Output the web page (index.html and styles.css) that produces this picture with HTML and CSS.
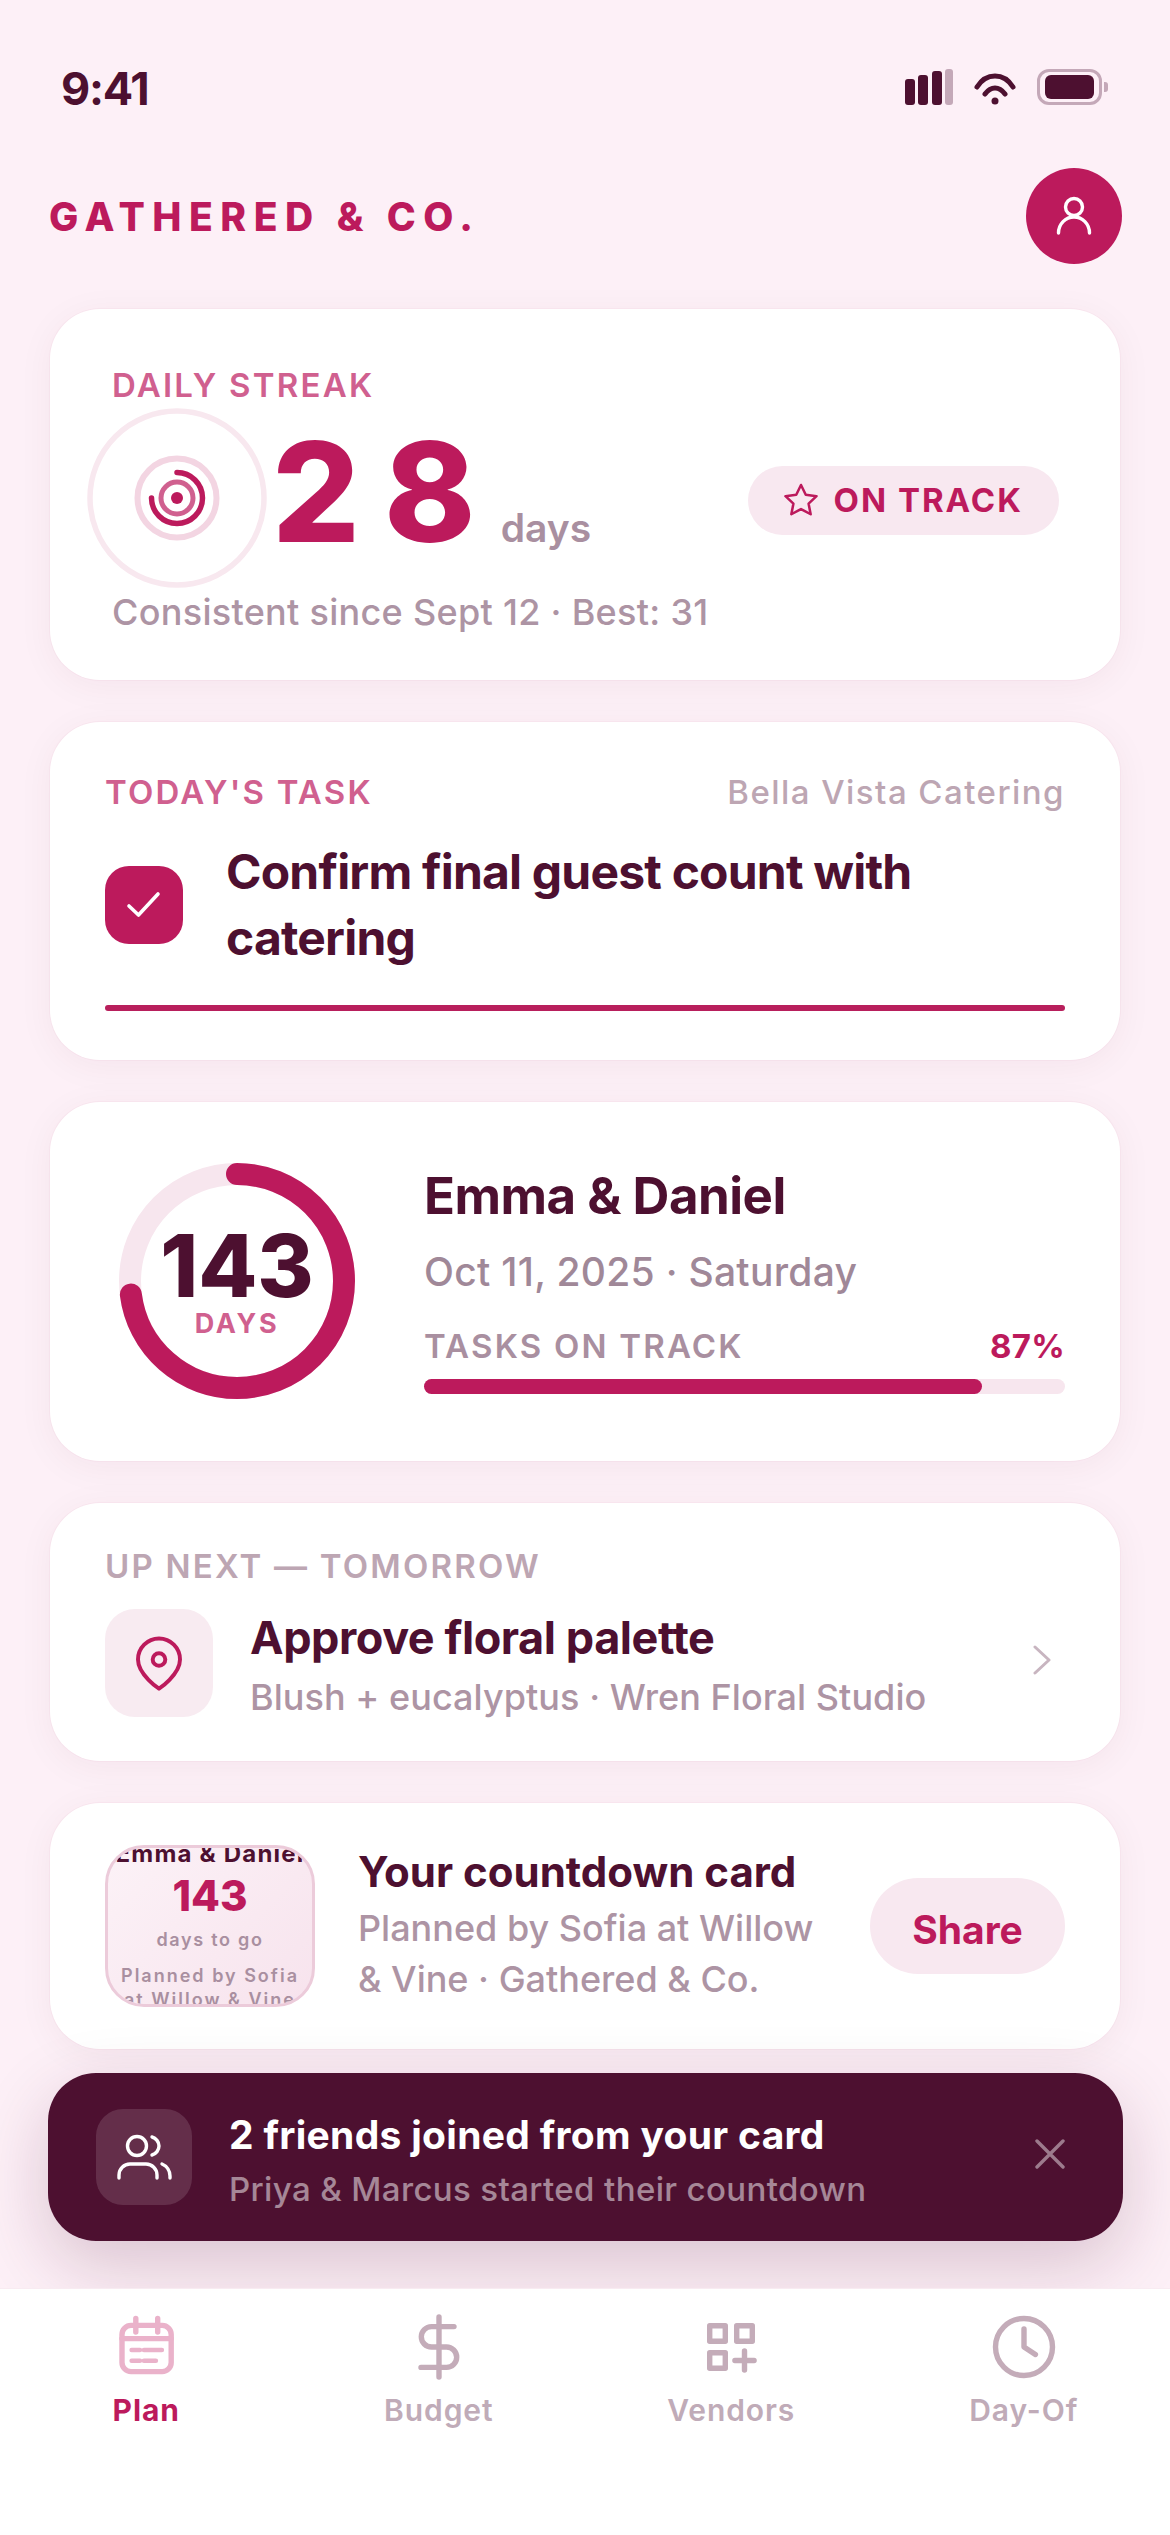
FILE: index.html
```html
<!DOCTYPE html>
<html lang="en">
<head>
    <meta charset="UTF-8">
    <meta name="viewport" content="width=device-width, initial-scale=1.0">
    <title>Gathered &amp; Co.</title>
    <link rel="stylesheet" href="styles.css">
</head>
<body>
    <div class="screen">
        <!-- Status bar -->
        <div class="status-bar">
            <span class="time">9:41</span>
            <div class="status-icons">
                <div class="signal">
                    <span class="sig-1"></span>
                    <span class="sig-2"></span>
                    <span class="sig-3"></span>
                    <span class="sig-4"></span>
                </div>
                <svg class="wifi" width="44" height="34" viewBox="0 0 44 34" fill="none" stroke="#4d1030" stroke-width="5" stroke-linecap="round">
                    <path d="M4 15C9 7 15 4 22 4s13 3 18 11"/>
                    <path d="M12 22c3-4 6-6 10-6s7 2 10 6"/>
                    <circle cx="22" cy="29" r="3.5" fill="#4d1030" stroke="none"/>
                </svg>
                <div class="battery">
                    <div class="battery-body"><div class="battery-fill"></div></div>
                    <div class="battery-cap"></div>
                </div>
            </div>
        </div>

        <!-- Header -->
        <div class="topbar">
            <div class="brand">GATHERED &amp; CO.</div>
            <div class="avatar">
                <svg width="48" height="48" viewBox="0 0 48 48" fill="none" stroke="#fff" stroke-width="3.4" stroke-linecap="round">
                    <circle cx="24" cy="15" r="8.5"/>
                    <path d="M8.5 41c0-9 7-16 15.500-16s15.500 7 15.500 16"/>
                </svg>
            </div>
        </div>

        <div class="cards">
            <!-- Daily streak -->
            <section class="card streak-card">
                <div class="label label-pink">DAILY STREAK</div>
                <div class="streak-row">
                    <svg class="streak-ring" width="180" height="180" viewBox="0 0 180 180" fill="none">
                        <circle cx="90" cy="90" r="87" stroke="#f8e8ef" stroke-width="5.500"/>
                        <circle cx="90" cy="90" r="39.500" stroke="#f3d5e2" stroke-width="6"/>
                        <path d="M90 64.500A25.500 25.500 0 1 1 64.500 90" stroke="#bc1a5c" stroke-width="5.500" stroke-linecap="round"/>
                        <circle cx="90" cy="90" r="16" stroke="#d0608f" stroke-width="5"/>
                        <circle cx="90" cy="90" r="6" fill="#bc1a5c"/>
                    </svg>
                    <div class="streak-count">
                        <span class="streak-num">28</span>
                        <span class="streak-unit">days</span>
                    </div>
                    <div class="pill">
                        <svg width="38" height="38" viewBox="0 0 24 24" fill="none" stroke="#bc1a5c" stroke-width="1.600" stroke-linejoin="round">
                            <path d="M12 2.500l3 6.200 6.800.9-5 4.700 1.300 6.700-6.100-3.300-6.100 3.300 1.300-6.700-5-4.700 6.800-.9z"/>
                        </svg>
                        <span>ON TRACK</span>
                    </div>
                </div>
                <div class="streak-sub">Consistent since Sept 12 · Best: 31</div>
            </section>

            <!-- Today's task -->
            <section class="card task-card">
                <div class="task-head">
                    <span class="label label-pink">TODAY'S TASK</span>
                    <span class="task-vendor">Bella Vista Catering</span>
                </div>
                <div class="task-row">
                    <div class="checkbox">
                        <svg width="36" height="36" viewBox="0 0 36 36" fill="none" stroke="#fff" stroke-width="3.600" stroke-linecap="round" stroke-linejoin="round">
                            <path d="M3 19l9.500 9L32 7"/>
                        </svg>
                    </div>
                    <div class="task-title">Confirm final guest count with catering</div>
                </div>
                <div class="task-bar"></div>
            </section>

            <!-- Countdown -->
            <section class="card countdown-card">
                <div class="gauge">
                    <svg width="236" height="236" viewBox="0 0 236 236" fill="none">
                        <circle cx="118" cy="118" r="107" stroke="#f7e6ee" stroke-width="22"/>
                        <circle class="gauge-arc" cx="118" cy="118" r="107" stroke="#bc1a5c" stroke-width="22" stroke-linecap="round" stroke-dasharray="490 672"/>
                    </svg>
                    <div class="gauge-text">
                        <div class="gauge-num">143</div>
                        <div class="gauge-unit">DAYS</div>
                    </div>
                </div>
                <div class="countdown-info">
                    <div class="couple">Emma &amp; Daniel</div>
                    <div class="wedding-date">Oct 11, 2025 · Saturday</div>
                    <div class="progress-head">
                        <span class="label label-muted">TASKS ON TRACK</span>
                        <span class="progress-val">87%</span>
                    </div>
                    <div class="progress"><div class="progress-fill"></div></div>
                </div>
            </section>

            <!-- Up next -->
            <section class="card next-card">
                <div class="label label-soft">UP NEXT — TOMORROW</div>
                <div class="next-row">
                    <div class="next-icon">
                        <svg width="56" height="56" viewBox="0 0 24 24" fill="none" stroke="#bc1a5c" stroke-width="1.700" stroke-linejoin="round">
                            <path d="M21 10.500c0 6.500-9 12.500-9 12.500s-9-6-9-12.500a9 9 0 0 1 18 0z"/>
                            <circle cx="12" cy="10.500" r="2.700"/>
                        </svg>
                    </div>
                    <div class="next-text">
                        <div class="next-title">Approve floral palette</div>
                        <div class="next-sub">Blush + eucalyptus · Wren Floral Studio</div>
                    </div>
                    <svg class="chevron" width="20" height="30" viewBox="0 0 20 30" fill="none" stroke="#c8b5c0" stroke-width="3" stroke-linecap="round" stroke-linejoin="round">
                        <path d="M3 2l14 13L3 28"/>
                    </svg>
                </div>
            </section>

            <!-- Countdown card share -->
            <section class="card share-card">
                <div class="thumb">
                    <div class="thumb-name">Emma &amp; Daniel</div>
                    <div class="thumb-num">143</div>
                    <div class="thumb-days">days to go</div>
                    <div class="thumb-by">Planned by Sofia at Willow &amp; Vine</div>
                </div>
                <div class="share-text">
                    <div class="share-title">Your countdown card</div>
                    <div class="share-sub">Planned by Sofia at Willow &amp; Vine · Gathered &amp; Co.</div>
                </div>
                <div class="share-btn">Share</div>
            </section>
        </div>

        <!-- Toast -->
        <div class="toast">
            <div class="toast-icon">
                <svg width="60" height="60" viewBox="0 0 60 60" fill="none" stroke="#fff" stroke-width="3.400" stroke-linecap="round">
                    <circle cx="23" cy="19" r="9.500"/>
                    <path d="M38 10c4 1 7 5 7 9s-3 8-7 9"/>
                    <path d="M5 51v-3c0-6 5-11 11-11h16c6 0 11 5 11 11v3"/>
                    <path d="M48 37c5 2 8 7 8 12v2"/>
                </svg>
            </div>
            <div class="toast-text">
                <div class="toast-title">2 friends joined from your card</div>
                <div class="toast-sub">Priya &amp; Marcus started their countdown</div>
            </div>
            <svg class="toast-close" width="30" height="30" viewBox="0 0 30 30" fill="none" stroke="#ffffff" stroke-opacity="0.45" stroke-width="3.400" stroke-linecap="round">
                <path d="M2 2l26 26M28 2L2 28"/>
            </svg>
        </div>

        <!-- Bottom nav -->
        <nav class="tabbar">
            <div class="tab tab-active">
                <svg width="72" height="72" viewBox="0 0 24 24" fill="none" stroke="#eab2ca" stroke-width="1.800" stroke-linecap="round">
                    <rect x="4" y="4.800" width="16.400" height="15.400" rx="3"/>
                    <path d="M8.600 2.500v4.500M15.900 2.500v4.500M4 9.200h16.400"/>
                    <path d="M7.200 13h2.800M11.300 13h6M7.200 16.600h2.800M11.300 16.600h4" stroke-width="1.500"/>
                </svg>
                <span>Plan</span>
            </div>
            <div class="tab">
                <svg width="72" height="72" viewBox="0 0 24 24" fill="none" stroke="#c4acb9" stroke-width="1.800" stroke-linecap="round" stroke-linejoin="round">
                    <path d="M12 2v20"/>
                    <path d="M17 5.200H9.500a3.400 3.400 0 0 0 0 6.800h5a3.400 3.400 0 0 1 0 6.800H6"/>
                </svg>
                <span>Budget</span>
            </div>
            <div class="tab">
                <svg width="72" height="72" viewBox="0 0 24 24" fill="none" stroke="#c4acb9" stroke-width="1.800" stroke-linecap="round" stroke-linejoin="round">
                    <rect x="4.900" y="4.900" width="5.200" height="5.200"/>
                    <rect x="13.900" y="4.900" width="5.200" height="5.200"/>
                    <rect x="4.900" y="13.900" width="5.200" height="5.200"/>
                    <path d="M16.500 13.300v6.400M13.300 16.500h6.400"/>
                </svg>
                <span>Vendors</span>
            </div>
            <div class="tab">
                <svg width="72" height="72" viewBox="0 0 24 24" fill="none" stroke="#c4acb9" stroke-width="1.800" stroke-linecap="round" stroke-linejoin="round">
                    <circle cx="12" cy="12" r="9.500"/>
                    <path d="M12 6v6l3.800 2.500"/>
                </svg>
                <span>Day-Of</span>
            </div>
        </nav>
    </div>
</body>
</html>
```
FILE: styles.css
```css
/* General Styles */
* {
    box-sizing: border-box;
}

body {
    margin: 0;
    background: #fdf0f7;
    font-family: Inter, "Noto Sans", sans-serif;
    color: #4d1030;
}

.screen {
    width: 1170px;
    height: 2535px;
    display: flex;
    flex-direction: column;
    overflow: hidden;
}

/* Status bar */
.status-bar {
    display: flex;
    justify-content: space-between;
    align-items: flex-start;
    padding: 62px 62px 0 61px;
    height: 116px;
}

.time {
    font-size: 45px;
    line-height: 54px;
    font-weight: 700;
    letter-spacing: -1.2px;
}

.status-icons {
    display: flex;
    align-items: flex-start;
    gap: 20px;
    margin-top: 7px;
}

.signal {
    display: flex;
    align-items: flex-end;
    gap: 3.5px;
    height: 36px;
}

.signal span {
    width: 10px;
    border-radius: 3px;
    background: #4d1030;
}

.sig-1 { height: 26px; }
.sig-2 { height: 30px; }
.sig-3 { height: 34px; }
.sig-4 { height: 36px; width: 8px !important; background: #c4a8b8 !important; }

.wifi {
    margin-top: 3px;
}

.battery {
    display: flex;
    align-items: center;
    gap: 2px;
    height: 36px;
}

.battery-body {
    width: 65px;
    height: 36px;
    padding: 3px 5px;
    border: 3px solid #c4a8b8;
    border-radius: 12px;
}

.battery-fill {
    width: 100%;
    height: 100%;
    border-radius: 6px;
    background: #4d1030;
}

.battery-cap {
    width: 4px;
    height: 10px;
    border-radius: 0 3px 3px 0;
    background: #c4a8b8;
}

/* Header */
.topbar {
    display: flex;
    justify-content: space-between;
    align-items: center;
    margin: 52px 48px 45px 49px;
}

.brand {
    padding-top: 2px;
    font-size: 39px;
    line-height: 48px;
    font-weight: 800;
    letter-spacing: 7.5px;
    color: #bc1a5c;
}

.avatar {
    width: 96px;
    height: 96px;
    border-radius: 50%;
    background: #bc1a5c;
    display: flex;
    align-items: center;
    justify-content: center;
}

/* Cards */
.cards {
    display: flex;
    flex-direction: column;
    gap: 42px;
    margin: 0 50px;
}

.card {
    background: #fff;
    border-radius: 50px;
    box-shadow: 0 0 0 1px rgba(188, 26, 92, 0.03), 0 6px 36px rgba(77, 16, 48, 0.05);
}

.label {
    font-size: 33px;
    line-height: 40px;
    font-weight: 600;
    letter-spacing: 2.2px;
}

.label-pink { color: #d0608f; }
.label-muted { color: #a98fa0; }
.label-soft { color: #bda6b3; }

/* Daily streak */
.streak-card {
    padding: 56px 61px 44px 62px;
}

.streak-row {
    display: flex;
    align-items: center;
    margin: 3px 0 0 -25px;
}

.streak-count {
    display: flex;
    align-items: baseline;
    margin: 0 0 12px 5px;
}

.streak-num {
    font-size: 138px;
    line-height: 1;
    font-weight: 800;
    letter-spacing: 24px;
    color: #bc1a5c;
}

.streak-unit {
    font-size: 39px;
    font-weight: 600;
    color: #a98fa0;
    margin-left: 1px;
}

.pill {
    display: flex;
    align-items: center;
    gap: 14px;
    height: 69px;
    margin: 4px 0 0 auto;
    padding: 0 36px 0 34px;
    border-radius: 35px;
    background: #f8e8f0;
    font-size: 33px;
    font-weight: 700;
    letter-spacing: 2px;
    color: #bc1a5c;
}

.streak-sub {
    font-size: 36px;
    line-height: 48px;
    font-weight: 500;
    letter-spacing: 0.3px;
    color: #ad94a4;
}

/* Today's task */
.task-card {
    padding: 50px 55px 49px;
}

.task-head {
    display: flex;
    justify-content: space-between;
    align-items: baseline;
}

.task-vendor {
    font-size: 33px;
    font-weight: 500;
    letter-spacing: 1.45px;
    color: #bda6b3;
}

.task-row {
    display: flex;
    align-items: center;
    gap: 43px;
    margin-top: 27px;
}

.checkbox {
    flex: none;
    width: 78px;
    height: 78px;
    border-radius: 24px;
    background: #bc1a5c;
    display: flex;
    align-items: center;
    justify-content: center;
}

.task-title {
    font-size: 48px;
    line-height: 66px;
    font-weight: 700;
    letter-spacing: -0.8px;
}

.task-bar {
    height: 6px;
    margin-top: 34px;
    border-radius: 3px;
    background: #b81f5c;
}

/* Countdown */
.countdown-card {
    display: flex;
    align-items: center;
    gap: 69px;
    padding: 61px 55px 62px 69px;
}

.gauge {
    position: relative;
    flex: none;
    width: 236px;
    height: 236px;
}

.gauge-arc {
    transform: rotate(-90deg);
    transform-origin: 118px 118px;
}

.gauge-text {
    position: absolute;
    inset: 0;
    display: flex;
    flex-direction: column;
    align-items: center;
    justify-content: center;
}

.gauge-num {
    font-size: 86px;
    line-height: 88px;
    font-weight: 800;
}

.gauge-unit {
    margin-top: -2px;
    font-size: 27px;
    line-height: 32px;
    font-weight: 700;
    letter-spacing: 2.7px;
    color: #d0608f;
}

.countdown-info {
    flex: 1;
}

.couple {
    font-size: 51px;
    line-height: 56px;
    font-weight: 700;
    letter-spacing: -0.5px;
}

.wedding-date {
    margin-top: 22px;
    font-size: 39px;
    line-height: 52px;
    font-weight: 500;
    letter-spacing: 0.28px;
    color: #a08898;
}

.progress-head {
    display: flex;
    justify-content: space-between;
    align-items: baseline;
    margin-top: 28px;
}

.progress-val {
    font-size: 33px;
    font-weight: 700;
    letter-spacing: 0.3px;
    color: #bc1a5c;
}

.progress {
    height: 15px;
    margin-top: 13px;
    border-radius: 8px;
    background: #f7e6ee;
}

.progress-fill {
    width: 87%;
    height: 100%;
    border-radius: 8px;
    background: #bc1a5c;
}

/* Up next */
.next-card {
    padding: 43px 68px 43px 55px;
}

.next-row {
    display: flex;
    align-items: center;
    gap: 37px;
    margin-top: 21px;
}

.next-icon {
    flex: none;
    width: 108px;
    height: 108px;
    border-radius: 30px;
    background: #f8ebf1;
    display: flex;
    align-items: center;
    justify-content: center;
}

.next-text {
    flex: 1;
    padding-top: 4px;
}

.next-title {
    font-size: 45px;
    line-height: 54px;
    font-weight: 700;
    letter-spacing: -0.44px;
}

.next-sub {
    margin-top: 11px;
    font-size: 36px;
    line-height: 42px;
    font-weight: 500;
    letter-spacing: 0.05px;
    color: #ad94a4;
}

.chevron {
    margin-bottom: 5px;
}

/* Share card */
.share-card {
    display: flex;
    align-items: center;
    gap: 43px;
    padding: 42px 55px 42px;
}

.thumb {
    flex: none;
    width: 210px;
    height: 162px;
    border: 3px solid #eccbda;
    border-radius: 39px;
    background: linear-gradient(135deg, #fcf2f7, #f7e3ed);
    overflow: hidden;
    display: flex;
    flex-direction: column;
    align-items: center;
    justify-content: center;
    text-align: center;
}

.thumb-name {
    flex: none;
    font-size: 24px;
    line-height: 28px;
    font-weight: 700;
    letter-spacing: 1.2px;
    white-space: nowrap;
}

.thumb-num {
    flex: none;
    margin-top: 3px;
    font-size: 42px;
    line-height: 50px;
    font-weight: 800;
    color: #bc1a5c;
}

.thumb-days {
    flex: none;
    margin-top: 8px;
    font-size: 18px;
    line-height: 22px;
    font-weight: 600;
    letter-spacing: 1.7px;
    color: #a98fa0;
}

.thumb-by {
    flex: none;
    margin-top: 13px;
    padding: 0 8px;
    font-size: 18px;
    line-height: 24px;
    font-weight: 600;
    letter-spacing: 2px;
    color: #a98fa0;
}

.share-text {
    flex: 1;
}

.share-title {
    font-size: 42px;
    line-height: 50px;
    font-weight: 700;
}

.share-sub {
    margin-top: 6px;
    font-size: 36px;
    line-height: 51px;
    font-weight: 500;
    color: #ad94a4;
}

.share-btn {
    flex: none;
    width: 195px;
    height: 96px;
    margin-left: -13px;
    border-radius: 48px;
    background: #f8e8f0;
    display: flex;
    align-items: center;
    justify-content: center;
    padding-top: 6px;
    font-size: 39px;
    font-weight: 700;
    color: #bc1a5c;
}

/* Toast */
.toast {
    position: relative;
    display: flex;
    align-items: center;
    gap: 37px;
    height: 168px;
    margin: 24px 47px 0 48px;
    padding: 0 58px 0 48px;
    border-radius: 48px;
    background: #4d1030;
    box-shadow: 0 24px 72px rgba(77, 16, 48, 0.2);
}

.toast-icon {
    flex: none;
    width: 96px;
    height: 96px;
    border-radius: 27px;
    background: rgba(255, 255, 255, 0.13);
    display: flex;
    align-items: center;
    justify-content: center;
}

.toast-text {
    flex: 1;
    padding-top: 6px;
}

.toast-title {
    font-size: 39px;
    line-height: 50px;
    font-weight: 700;
    letter-spacing: 0.3px;
    color: #fff;
}

.toast-sub {
    margin-top: 7px;
    font-size: 33px;
    line-height: 44px;
    font-weight: 500;
    letter-spacing: 0.37px;
    color: rgba(255, 255, 255, 0.5);
}

.toast-close {
    margin-bottom: 6px;
}

/* Bottom nav */
.tabbar {
    position: relative;
    flex: 1;
    display: flex;
    align-items: flex-start;
    margin-top: 47px;
    padding-top: 22px;
    background: #fff;
    border-top: 1px solid #f8ebf1;
}

.tab {
    flex: 1;
    display: flex;
    flex-direction: column;
    align-items: center;
    gap: 9px;
    font-size: 30px;
    line-height: 36px;
    font-weight: 600;
    letter-spacing: 0.03em;
    color: #c0abb8;
}

.tab-active {
    font-weight: 700;
    color: #bc1a5c;
}
```
